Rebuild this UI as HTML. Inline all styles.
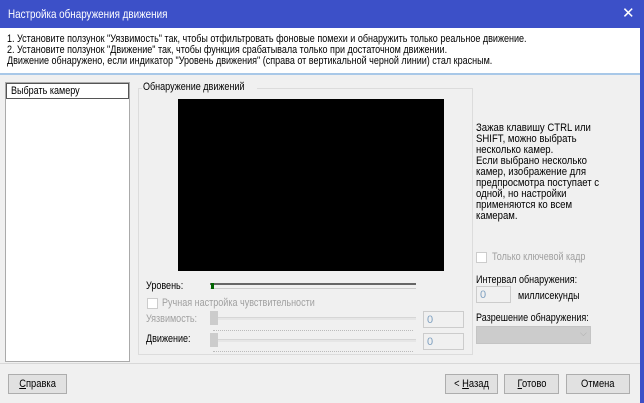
<!DOCTYPE html>
<html><head><meta charset="utf-8"><style>
*{box-sizing:border-box;margin:0;padding:0}
body{width:644px;height:403px;overflow:hidden;background:#f0f0f0;font-family:"Liberation Sans",sans-serif;font-size:11px;color:#000;position:relative}
.a{position:absolute;white-space:nowrap}
.t{transform:scaleX(.82);transform-origin:0 0}
.dis{color:#a0a0a0}
.btn{position:absolute;height:20px;border:1px solid #adadad;background:#e1e1e1;text-align:center;line-height:18px}
.btn span{display:inline-block;transform:scaleX(.85)}
.box{position:absolute;background:#fff;border:1px solid #7a7a7a}
.dbox{position:absolute;border:1px solid #ccc;background:#f0f0f0;color:#7fa0c0;padding-left:3px;line-height:16px}
.trk{position:absolute;height:3px;background:#e6e6e6;border-top:1px solid #d6d6d6}
.thumb{position:absolute;width:8px;height:14px;background:#ccc}
.ticks{position:absolute;height:2px;border-top:1px dotted #bbb}
</style></head><body>
<div class="a" style="left:0;top:0;width:644px;height:28px;background:#3c50c8"></div>
<div class="a t" style="left:8px;top:7px;color:#fff;font-size:12px">Настройка обнаружения движения</div>
<div class="a" style="left:622px;top:4px;color:#fff;font-size:15px">✕</div>
<div class="a" style="left:0;top:28px;width:640px;height:45px;background:#fff"></div>
<div class="a" style="left:0;top:73px;width:640px;height:2px;background:#a8c8e8"></div>
<div class="a" style="left:640px;top:28px;width:4px;height:375px;background:#3c50c8"></div>
<div class="a t" style="left:7px;top:34px;line-height:11px">1. Установите ползунок "Уязвимость" так, чтобы отфильтровать фоновые помехи и обнаружить только реальное движение.<br>2. Установите ползунок "Движение" так, чтобы функция срабатывала только при достаточном движении.<br>Движение обнаружено, если индикатор "Уровень движения" (справа от вертикальной черной линии) стал красным.</div>
<div class="box" style="left:5px;top:82px;width:125px;height:280px;border-color:#aaa"></div>
<div class="a" style="left:6px;top:83px;width:123px;height:16px;border:1px solid #555;background:#fff;padding-left:4px;line-height:14px"><div class="t">Выбрать камеру</div></div>
<div class="a" style="left:138px;top:88px;width:335px;height:267px;border:1px solid #dcdcdc"></div>
<div class="a" style="left:142px;top:81px;width:115px;height:12px;background:#f0f0f0"></div>
<div class="a t" style="left:143px;top:81px">Обнаружение движений</div>
<div class="a" style="left:178px;top:99px;width:266px;height:172px;background:#000"></div>
<div class="a" style="left:476px;top:123px;line-height:11px;transform:scaleX(.87);transform-origin:0 0">Зажав клавишу CTRL или<br>SHIFT, можно выбрать<br>несколько камер.<br>Если выбрано несколько<br>камер, изображение для<br>предпросмотра поступает с<br>одной, но настройки<br>применяются ко всем<br>камерам.</div>
<div class="a t" style="left:146px;top:280px">Уровень:</div>
<div class="a" style="left:210px;top:283px;width:206px;height:6px;border-top:2px solid #666;border-bottom:1px solid #ccc"></div>
<div class="a" style="left:211px;top:283px;width:3px;height:6px;background:#060"></div>
<div class="a" style="left:147px;top:298px;width:11px;height:11px;border:1px solid #ccc;background:#fff"></div>
<div class="a t dis" style="left:162px;top:297px">Ручная настройка чувствительности</div>
<div class="a t dis" style="left:146px;top:313px">Уязвимость:</div>
<div class="trk" style="left:210px;top:317px;width:206px"></div>
<div class="thumb" style="left:210px;top:311px"></div>
<div class="ticks" style="left:213px;top:330px;width:200px"></div>
<div class="dbox" style="left:423px;top:311px;width:41px;height:17px">0</div>
<div class="a t" style="left:146px;top:333px">Движение:</div>
<div class="trk" style="left:210px;top:339px;width:206px"></div>
<div class="thumb" style="left:210px;top:333px"></div>
<div class="ticks" style="left:213px;top:351px;width:200px"></div>
<div class="dbox" style="left:423px;top:333px;width:41px;height:17px">0</div>
<div class="a" style="left:476px;top:252px;width:11px;height:11px;border:1px solid #ccc;background:#fff"></div>
<div class="a t dis" style="left:492px;top:251px">Только ключевой кадр</div>
<div class="a t" style="left:476px;top:274px">Интервал обнаружения:</div>
<div class="dbox" style="left:476px;top:286px;width:35px;height:17px">0</div>
<div class="a t" style="left:518px;top:290px">миллисекунды</div>
<div class="a t" style="left:476px;top:312px">Разрешение обнаружения:</div>
<div class="a" style="left:476px;top:326px;width:115px;height:18px;background:#ccc;border:1px solid #c4c4c4"></div>
<div class="a" style="left:580px;top:328px;color:#aaa;font-size:9px">⌵</div>
<div class="a" style="left:0;top:363px;width:640px;height:1px;background:#d8d8d8"></div>
<div class="btn" style="left:8px;top:374px;width:59px"><span><u>С</u>правка</span></div>
<div class="btn" style="left:445px;top:374px;width:53px"><span>&lt; <u>Н</u>азад</span></div>
<div class="btn" style="left:504px;top:374px;width:55px"><span><u>Г</u>отово</span></div>
<div class="btn" style="left:566px;top:374px;width:64px"><span>Отмена</span></div>
</body></html>
